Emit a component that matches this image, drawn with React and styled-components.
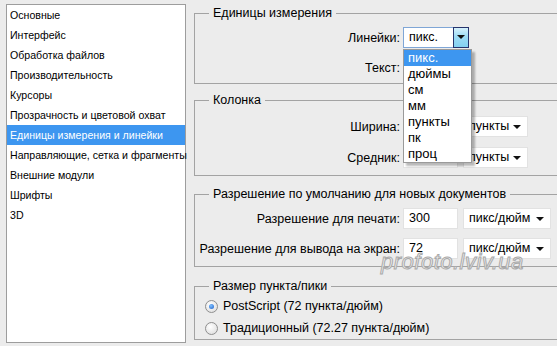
import React from 'react'
import styled, { createGlobalStyle } from 'styled-components';

const Global = createGlobalStyle`
  html, body {
    margin: 0;
    padding: 0;
    background: #ececec;
    overflow: hidden;
  }
  body {
    font-family: "Liberation Sans", Arial, sans-serif;
    color: #000;
  }
`;

const Page = styled.div`
  position: relative;
  display: flex;
  align-items: flex-start;
  gap: 8px;
  width: 557px;
  height: 346px;
  padding: 4px 0 0 6px;
  box-sizing: border-box;
  overflow: hidden;
`;

const Sidebar = styled.ul`
  list-style: none;
  margin: 0;
  padding: 0;
  width: 180px;
  height: 339px;
  box-sizing: border-box;
  flex: none;
  background: #fff;
  border: 1px solid #9d9d9d;
  font-size: 10.6px;
`;

const Item = styled.li`
  height: 20px;
  line-height: 20px;
  padding-left: 3px;
  white-space: nowrap;
  background: ${p => (p.$active ? '#3d96f0' : 'transparent')};
  color: ${p => (p.$active ? '#fff' : '#000')};
`;

const Panels = styled.div`
  display: flex;
  flex-direction: column;
  width: 380px;
  flex: none;
  font-size: 12.5px;
`;

const Group = styled.fieldset`
  margin: ${p => p.$top}px 0 0 0;
  padding: ${p => p.$pt}px 0 ${p => p.$pb}px 0;
  min-width: 0;
  border: 1px solid #a3a3a3;
  display: grid;
  row-gap: ${p => p.$gap}px;
  legend {
    margin-left: 14px;
    padding: 0 4px;
    line-height: 16px;
  }
`;

const Row = styled.div`
  display: grid;
  grid-template-columns: 205px auto;
  column-gap: 3px;
  align-items: center;
  height: 21px;
`;

const Label = styled.span`
  text-align: right;
  white-space: nowrap;
`;

const Controls = styled.div`
  display: flex;
  gap: 5px;
  align-items: center;
`;

const Input = styled.div`
  width: ${p => p.$w}px;
  height: 21px;
  box-sizing: border-box;
  background: #fff;
  border: 1px solid #e2e2e2;
  padding-left: 5px;
  line-height: 19px;
`;

const Select = styled.div`
  position: relative;
  width: ${p => p.$w}px;
  height: 21px;
  box-sizing: border-box;
  background: #fff;
  border: 1px solid #e2e2e2;
  padding-left: 5px;
  line-height: 19px;
  &::after {
    content: '';
    position: absolute;
    right: 6px;
    top: 8px;
    border-left: 4px solid transparent;
    border-right: 4px solid transparent;
    border-top: 4px solid #111;
  }
`;

const OpenSelect = styled.div`
  position: relative;
  display: flex;
  width: 66px;
  height: 21px;
`;

const OpenField = styled.div`
  flex: 1;
  box-sizing: border-box;
  background: #fff;
  border: 1px solid #7fa6d6;
  border-right: none;
  padding-left: 5px;
  line-height: 19px;
`;

const OpenButton = styled.div`
  position: relative;
  width: 16px;
  box-sizing: border-box;
  border: 1px solid #26356d;
  background: linear-gradient(#d6f1fc 0%, #9ddcf6 45%, #83d1f2 100%);
  &::after {
    content: '';
    position: absolute;
    left: 3px;
    top: 7px;
    border-left: 4px solid transparent;
    border-right: 4px solid transparent;
    border-top: 4px solid #111;
  }
`;

const Dropdown = styled.ul`
  position: absolute;
  top: 22px;
  left: 0;
  z-index: 2;
  width: 67px;
  margin: 0;
  padding: 0;
  list-style: none;
  background: #fff;
  border: 1px solid #9a9a9a;
  box-shadow: 3px 3px 2px rgba(0, 0, 0, 0.28);
  font-size: 13px;
`;

const Option = styled.li`
  height: 16px;
  line-height: 16px;
  padding-left: 4px;
  background: ${p => (p.$active ? '#3d96f0' : 'transparent')};
  color: ${p => (p.$active ? '#fff' : '#000')};
`;

const RadioRow = styled.label`
  display: flex;
  align-items: center;
  gap: 5px;
  height: 20px;
  padding-left: 10px;
`;

const Radio = styled.span`
  position: relative;
  width: 11px;
  height: 11px;
  border-radius: 50%;
  border: 1px solid #8f8f8f;
  background: radial-gradient(circle at 40% 35%, #ffffff, #d9d9d9);
  &::after {
    content: '';
    display: ${p => (p.$on ? 'block' : 'none')};
    position: absolute;
    left: 3px;
    top: 3px;
    width: 5px;
    height: 5px;
    border-radius: 50%;
    background: radial-gradient(circle at 40% 35%, #7fc0ff, #1d5fc8);
  }
`;

const Watermark = styled.div`
  position: absolute;
  left: 381px;
  top: 249px;
  font-family: "Liberation Sans", Arial, sans-serif;
  font-style: italic;
  font-size: 22px;
  letter-spacing: 0.5px;
  color: #f1f1f1;
  -webkit-text-stroke: 1px #a9a9a9;
  pointer-events: none;
`;

const sections = [
  'Основные',
  'Интерфейс',
  'Обработка файлов',
  'Производительность',
  'Курсоры',
  'Прозрачность и цветовой охват',
  'Единицы измерения и линейки',
  'Направляющие, сетка и фрагменты',
  'Внешние модули',
  'Шрифты',
  '3D',
];

const units = ['пикс.', 'дюймы', 'см', 'мм', 'пункты', 'пк', 'проц'];

const App = () => (
  <Page>
    <Global />
    <Sidebar>
      {sections.map(s => (
        <Item key={s} $active={s === 'Единицы измерения и линейки'}>{s}</Item>
      ))}
    </Sidebar>
    <Panels>
      <Group $top={1} $pt={6} $pb={5} $gap={9}>
        <legend>Единицы измерения</legend>
        <Row>
          <Label>Линейки:</Label>
          <OpenSelect>
            <OpenField>пикс.</OpenField>
            <OpenButton />
            <Dropdown>
              {units.map(u => (
                <Option key={u} $active={u === 'пикс.'}>{u}</Option>
              ))}
            </Dropdown>
          </OpenSelect>
        </Row>
        <Row>
          <Label>Текст:</Label>
          <Controls>
            {/* covered by the open list */}
            <Select $w={66} />
          </Controls>
        </Row>
      </Group>
      <Group $top={8} $pt={8} $pb={7} $gap={10}>
        <legend>Колонка</legend>
        <Row>
          <Label>Ширина:</Label>
          <Controls>
            <Input $w={55} />
            <Select $w={65}>пункты</Select>
          </Controls>
        </Row>
        <Row>
          <Label>Средник:</Label>
          <Controls>
            <Input $w={55} />
            <Select $w={65}>пункты</Select>
          </Controls>
        </Row>
      </Group>
      <Group $top={10} $pt={6} $pb={7} $gap={9}>
        <legend>Разрешение по умолчанию для новых документов</legend>
        <Row>
          <Label>Разрешение для печати:</Label>
          <Controls>
            <Input $w={55}>300</Input>
            <Select $w={88}>пикс/дюйм</Select>
          </Controls>
        </Row>
        <Row>
          <Label>Разрешение для вывода на экран:</Label>
          <Controls>
            <Input $w={55}>72</Input>
            <Select $w={88}>пикс/дюйм</Select>
          </Controls>
        </Row>
      </Group>
      <Group $top={11} $pt={2} $pb={1} $gap={2}>
        <legend>Размер пункта/пики</legend>
        <RadioRow><Radio $on />PostScript (72 пункта/дюйм)</RadioRow>
        <RadioRow><Radio />Традиционный (72.27 пункта/дюйм)</RadioRow>
      </Group>
    </Panels>
    <Watermark>profoto.lviv.ua</Watermark>
  </Page>
)

export default App
